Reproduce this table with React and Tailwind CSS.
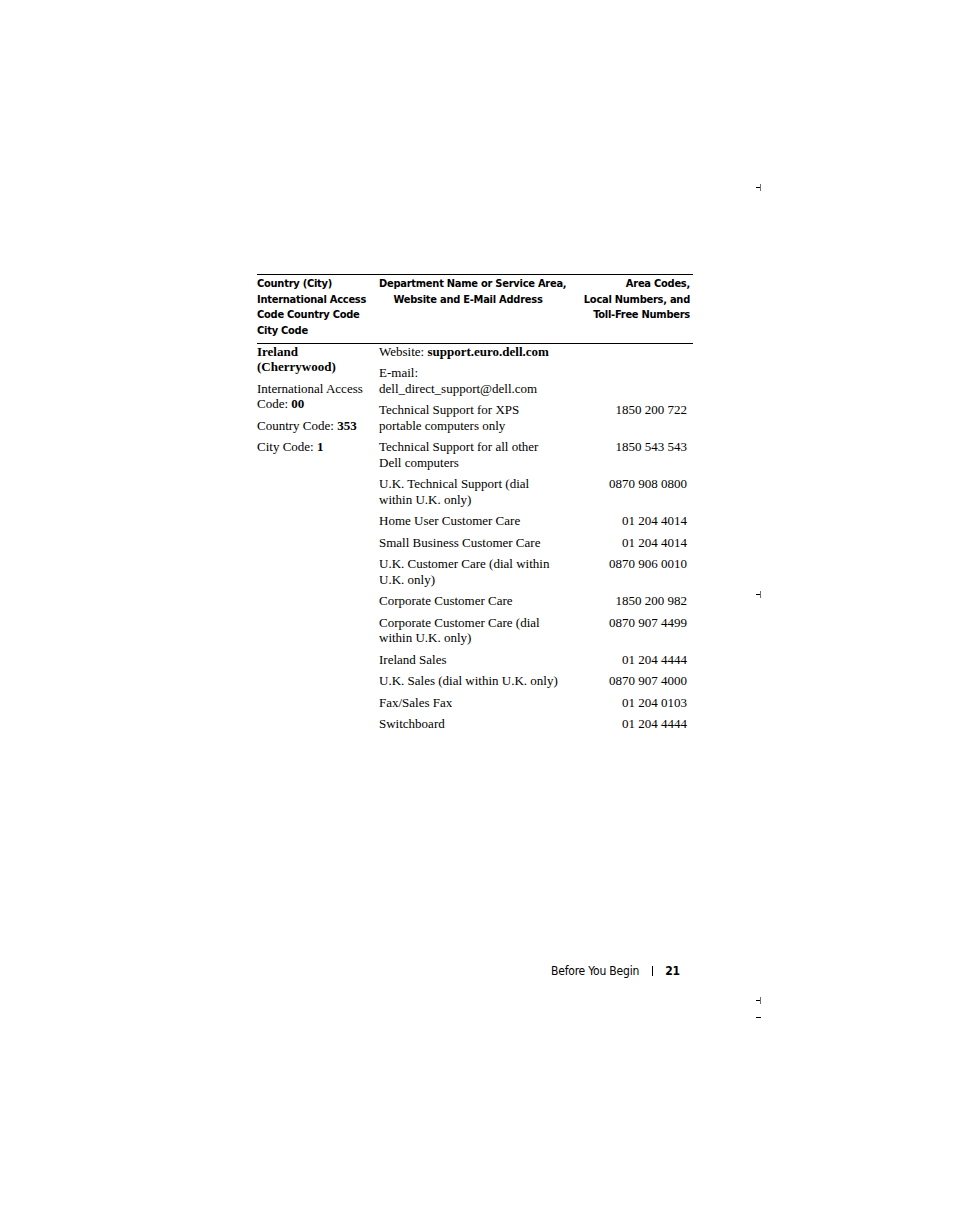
import React from 'react';

const sans = { fontFamily: '"Liberation Sans Narrow", "DejaVu Sans Condensed", "Liberation Sans", sans-serif' };

const services = [
    { lines: [<>Website: <b className="font-bold">support.euro.dell.com</b></>], num: '' },
    { lines: ['E-mail:', 'dell_direct_support@dell.com'], num: '' },
    { lines: ['Technical Support for XPS', 'portable computers only'], num: '1850 200 722' },
    { lines: ['Technical Support for all other', 'Dell computers'], num: '1850 543 543' },
    { lines: ['U.K. Technical Support (dial', 'within U.K. only)'], num: '0870 908 0800' },
    { lines: ['Home User Customer Care'], num: '01 204 4014' },
    { lines: ['Small Business Customer Care'], num: '01 204 4014' },
    { lines: ['U.K. Customer Care (dial within', 'U.K. only)'], num: '0870 906 0010' },
    { lines: ['Corporate Customer Care'], num: '1850 200 982' },
    { lines: ['Corporate Customer Care (dial', 'within U.K. only)'], num: '0870 907 4499' },
    { lines: ['Ireland Sales'], num: '01 204 4444' },
    { lines: ['U.K. Sales (dial within U.K. only)'], num: '0870 907 4000' },
    { lines: ['Fax/Sales Fax'], num: '01 204 0103' },
    { lines: ['Switchboard'], num: '01 204 4444' },
];

// little printer's crop marks down the right edge
const CropMark = ({ top, bar = true }) => (
    <div className="absolute left-[756px]" style={{ top }}>
        <div className="w-[5px] h-px bg-black" />
        {bar && <div className="absolute left-[4px] top-[-3px] w-px h-[7px] bg-gray-500" />}
    </div>
);

const App = () => {
    return (
        <div className="relative w-[954px] h-[1211px] bg-white text-black overflow-hidden">
            <CropMark top={187} />
            <CropMark top={594} />
            <CropMark top={1000} />
            <CropMark top={1017} bar={false} />

            <div className="pt-[274px] pl-[257px]">
                <div className="w-[436px]">
                    {/* header */}
                    <div className="flex border-t border-black border-b pt-[1px] pb-[4px] text-[11px] tracking-[-0.25px] leading-[15.7px] font-bold whitespace-nowrap" style={sans}>
                        <div className="w-[122px]">
                            Country (City)<br />International Access<br />Code Country Code<br />City Code
                        </div>
                        <div className="w-[178px] text-center">
                            Department Name or Service Area,<br />Website and E-Mail Address
                        </div>
                        <div className="flex-1 text-right pr-[3px]">
                            Area Codes,<br />Local Numbers, and<br />Toll-Free Numbers
                        </div>
                    </div>

                    {/* body */}
                    <div className="flex text-[13px] leading-[15.5px]" style={{ fontFamily: '"Liberation Serif", serif' }}>
                        <div className="w-[122px] flex flex-col gap-[6px]">
                            <div className="font-bold">Ireland<br />(Cherrywood)</div>
                            <div>International Access<br />Code: <b>00</b></div>
                            <div>Country Code: <b>353</b></div>
                            <div>City Code: <b>1</b></div>
                        </div>
                        <div className="flex-1 flex flex-col gap-[6px] pr-[6px]">
                            {services.map((s, i) => (
                                <div key={i} className="flex justify-between">
                                    <div className="whitespace-nowrap">
                                        {s.lines.map((l, j) => <div key={j}>{l}</div>)}
                                    </div>
                                    <div className="whitespace-nowrap">{s.num}</div>
                                </div>
                            ))}
                        </div>
                    </div>
                </div>
            </div>

            {/* footer */}
            <div className="absolute top-[963px] left-[551px] flex items-center text-[12px] tracking-[-0.2px] leading-[16px]" style={sans}>
                <span>Before You Begin</span>
                <span className="ml-[13px] mr-[12px] w-px h-[10px] bg-black" />
                <span className="font-bold">21</span>
            </div>
        </div>
    );
};

export default App;
